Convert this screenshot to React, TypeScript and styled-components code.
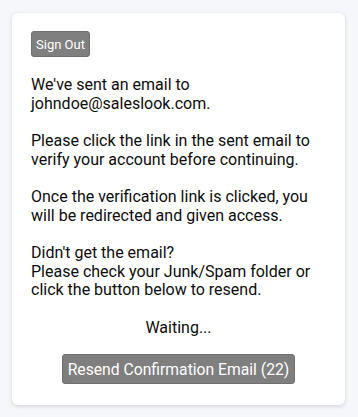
import React from "react";
import styled, { createGlobalStyle } from "styled-components";

const GlobalStyle = createGlobalStyle`
  html, body {
    margin: 0;
    padding: 0;
    background-color: #f6f7fb;
  }
  body {
    font-family: Roboto, "Liberation Sans", Arial, sans-serif;
  }
`;

const Page = styled.div`
  padding: 13px 13px 15px 12px;
`;

const Card = styled.div`
  background-color: #ffffff;
  border-radius: 6px;
  box-shadow: rgba(0, 0, 0, 0.16) 0px 1px 4px;
  padding: 18px 19px 21px 19px;
  color: #0d0d0d;
`;

const Button = styled.button<{ $big?: boolean }>`
  font-family: Roboto, "Liberation Sans", Arial, sans-serif;
  font-size: ${(p) => (p.$big ? "15.7px" : "13px")};
  height: ${(p) => (p.$big ? "30px" : "26px")};
  padding: ${(p) => (p.$big ? "0 5px" : "0 4px")};
  color: #ffffff;
  background-color: #7f7f7f;
  border: 1px solid #707070;
  border-radius: 3px;
  cursor: pointer;
`;

const Text = styled.p`
  font-size: 16px;
  line-height: 18.5px;
  margin: 19px 0 0 0;
`;

const Center = styled.div`
  display: flex;
  flex-direction: column;
  align-items: center;
  margin-top: 19px;
  gap: 17px;
`;

const Waiting = styled.div`
  font-size: 16px;
  line-height: 18.5px;
`;

export default function App() {
  return (
    <Page>
      <GlobalStyle />
      <Card>
        <Button>Sign Out</Button>
        <Text>
          We've sent an email to
          <br />
          johndoe@saleslook.com.
        </Text>
        <Text>
          Please click the link in the sent email to verify your account before
          continuing.
        </Text>
        <Text>
          Once the verification link is clicked, you will be redirected and
          given access.
        </Text>
        <Text>
          Didn't get the email?
          <br />
          Please check your Junk/Spam folder or click the button below to
          resend.
        </Text>
        <Center>
          <Waiting>Waiting...</Waiting>
          <Button $big>Resend Confirmation Email (22)</Button>
        </Center>
      </Card>
    </Page>
  );
}
